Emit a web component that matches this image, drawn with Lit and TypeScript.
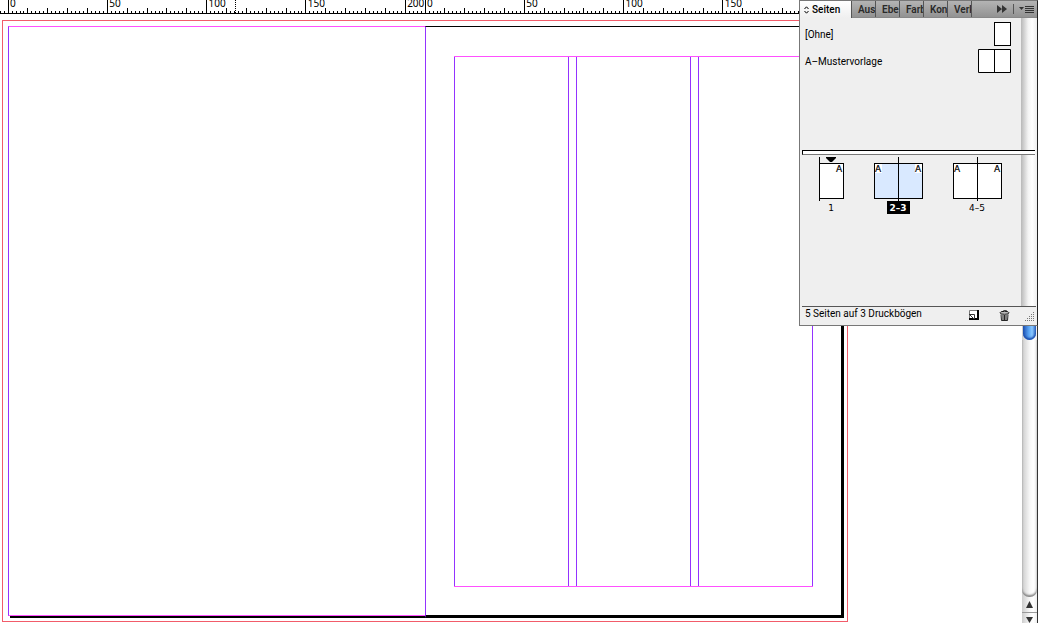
import { LitElement, html, css, svg } from "lit";
import { customElement, property } from "lit/decorators.js";

const PAGE_MM = 210;

@customElement("ruler-scale")
class RulerScale extends LitElement {
  @property({ type: Number }) from = 0;
  @property({ type: Number }) to = PAGE_MM;

  static styles = css`
    :host { display: block; min-width: 0; }
    .scale { display: block; width: 100%; height: 14px; overflow: visible; }
    line { stroke: #000; stroke-width: 1px; shape-rendering: crispEdges; }
    text { font: 10px/12px "Lucida Grande", "Noto Sans", sans-serif; fill: #000; }
  `;

  render() {
    const ticks = [];
    const labels = [];
    for (let mm = this.from; mm < this.to; mm += 2) {
      const x = `${(mm / PAGE_MM) * 100}%`;
      const top = mm % 50 === 0 ? 0 : mm % 10 === 0 ? 8 : 11;
      ticks.push(svg`<line x1=${x} x2=${x} y1=${top} y2="13" transform="translate(0.1 0)"></line>`);
      if (mm >= 0 && mm % 50 === 0) {
        labels.push(svg`<text x=${x} y="7" dx="2">${mm}</text>`);
      }
    }
    return html`<svg class="scale" aria-hidden="true">${ticks}${labels}</svg>`;
  }
}

@customElement("page-thumb")
class PageThumb extends LitElement {
  @property() label = "";
  @property({ type: Number }) pages = 2;
  @property({ type: Boolean }) selected = false;
  @property({ type: Boolean }) section = false;

  static styles = css`
    :host { display: block; }
    .thumb {
      display: flex; flex-direction: column; align-items: center;
      padding: 0; border: 0; background: none; color: #000;
      font: 9px/12px "Lucida Grande", "DejaVu Sans", sans-serif;
    }
    .spread { display: block; }
    .sheet { fill: #fff; stroke: #000; }
    .on .sheet { fill: #d9e9ff; }
    .spine { stroke: #000; }
    .tag { fill: #fff; }
    text { font: 9px "Lucida Grande", "DejaVu Sans", sans-serif; stroke: #000; stroke-width: 0.2px; }
    .label { padding: 1px 3px 0 2px; }
    .on .label { background: #000; color: #fff; font-weight: bold; }
  `;

  render() {
    const single = this.pages === 1;
    const w = single ? 25 : 49;
    const spine = single ? 0.5 : 24.5;
    return html`
      <button class="thumb ${this.selected ? "on" : ""}" aria-pressed=${this.selected}>
        <svg class="spread" width=${w} height="45" viewBox="0 0 ${w} 45">
          <rect class="sheet" x="0.5" y="7.5" width=${w - 1} height="35"></rect>
          ${single ? "" : svg`<rect class="tag" x="1" y="8" width="7" height="9"></rect><text x="1" y="16">A</text>`}
          <rect class="tag" x=${w - 8} y="8" width="7" height="9"></rect>
          <text x=${w - 8} y="16">A</text>
          <path class="spine" d="M${spine} 1V45"></path>
          ${this.section ? svg`<path d="M7 1H17V2L13 6H11L7 2Z"></path>` : ""}
        </svg>
        <span class="label">${this.label}</span>
      </button>`;
  }
}

@customElement("pages-panel")
class PagesPanel extends LitElement {
  static styles = css`
    :host {
      display: flex; flex-direction: column; box-sizing: border-box;
      border: 1px solid #777; border-right-color: #222; background: #efefef;
      font: 10px/14px "Lucida Grande", "Roboto", sans-serif; color: #000;
    }
    button { font: inherit; color: inherit; padding: 0; border: 0; background: none; }
    .tabs { display: flex; height: 17px; background: linear-gradient(#b4b4b4, #929292); border-bottom: 1px solid #888; box-sizing: border-box; }
    .tab {
      width: 24px; padding: 1px 0 0 6px; overflow: hidden; text-align: left; white-space: nowrap;
      border-right: 1px solid #555; color: #2a2a2a; font-weight: 600;
    }
    .tab.active {
      display: flex; align-items: center; gap: 3px; width: 52px; padding-left: 4px;
      height: 17px; background: linear-gradient(#fff, #efefef); color: #000; font-weight: 500;
    }
    .tools { display: flex; align-items: center; margin-left: auto; padding-right: 3px; gap: 5px; }
    .tools button { display: flex; }
    .body { flex: 1; display: grid; grid-template-columns: 1fr 16px; min-height: 0; }
    .lists { display: flex; flex-direction: column; padding-left: 2px; min-width: 0; }
    .masters { height: 132px; padding: 2px 10px 0 3px; box-sizing: border-box; }
    .master { display: flex; width: 100%; height: 27px; align-items: center; justify-content: space-between; }
    .master span { padding-top: 2px; }
    .divider { position: relative; height: 3px; border: 1px solid #000; border-bottom-color: #777; border-right: 0; background: #fff; margin-right: -14px; }
    .pages { display: flex; align-items: flex-start; gap: 30px; padding: 1px 0 0 17px; }
    .track { background: linear-gradient(90deg, #b8b8b8, #f4f4f4 45%, #fff 70%, #eee); }
    .foot {
      display: grid; grid-template-columns: 1fr 30px 26px 11px; align-items: center;
      height: 18px; margin: 0 1px 0 2px; padding-left: 3px; border-top: 1px solid #555;
    }
    .foot span { align-self: start; }
    .foot button { display: flex; padding-bottom: 2px; }
    .foot svg { display: block; }
  `;

  render() {
    return html`
      <div class="tabs" role="tablist">
        <button class="tab active" role="tab" aria-selected="true">
          <svg width="5" height="8" viewBox="0 0 5 8"><path d="M.5 3 2.5.8 4.5 3M.5 5 2.5 7.2 4.5 5" fill="none" stroke="#000"></path></svg>Seiten
        </button>
        ${["Aus", "Ebe", "Farb", "Kon", "Verk"].map((t) => html`<button class="tab" role="tab" aria-selected="false">${t}</button>`)}
        <div class="tools">
          <button aria-label="Reduzieren"><svg width="11" height="8" viewBox="0 0 11 8"><path d="M0 0 5 4 0 8ZM5 0 10 4 5 8Z" fill="#333"></path></svg></button>
          <svg width="1" height="10"><path d="M.5 0V10" stroke="#555"></path></svg>
          <button aria-label="Menü"><svg width="15" height="9" viewBox="0 0 15 9"><path d="M0 2H5L2.500 5Z" fill="#333"></path><path d="M6 1.500H15M6 3.500H15M6 5.500H15M6 7.500H15" stroke="#333"></path></svg></button>
        </div>
      </div>
      <div class="body">
        <div class="lists">
          <div class="masters">
            <button class="master"><span>[Ohne]</span>
              <svg width="17" height="24"><rect x=".5" y=".5" width="16" height="23" fill="#fff" stroke="#000"></rect></svg></button>
            <button class="master"><span>A–Mustervorlage</span>
              <svg width="33" height="24"><path d="M.5 .5H32.500V23.500H.5ZM16.500 .5V23.500" fill="#fff" stroke="#000"></path></svg></button>
          </div>
          <div class="divider"></div>
          <div class="pages">
            <page-thumb label="1" pages="1" section></page-thumb>
            <page-thumb label="2–3" selected></page-thumb>
            <page-thumb label="4–5"></page-thumb>
          </div>
        </div>
        <div class="track"></div>
      </div>
      <div class="foot">
        <span>5 Seiten auf 3 Druckbögen</span>
        <button aria-label="Neue Seite"><svg width="10" height="10" viewBox="0 0 10 10"><path d="M.5 .5H9.500V9.500H.5Z" fill="#fff" stroke="#777"></path><path d="M9 0V9H0" fill="none" stroke="#000" stroke-width="2"></path><path d="M0 4.500H5.500V9" fill="none" stroke="#333"></path><path d="M1 5 5 9" stroke="#333"></path></svg></button>
        <button aria-label="Löschen"><svg width="11" height="11" viewBox="0 0 11 11"><path d="M2 4 2.500 10.500H8.500L9 4Z" fill="#ddd"></path><ellipse cx="5.500" cy="2.800" rx="4.500" ry="1.500" fill="#bbb" stroke="#222"></ellipse><path d="M3.500 1.500 5.500 .5 8 1M2 4.500 2.500 10.500H8.500L9 4.500M4 5V10M5.500 5V10M7 5V10" fill="none" stroke="#111" stroke-width=".9"></path></svg></button>
        <svg width="10" height="10" viewBox="0 0 10 10"><path d="M8.500 1V2M6.500 3V4M8.500 3V4M4.500 5V6M6.500 5V6M8.500 5V6M2.500 7V8M4.500 7V8M6.500 7V8M8.500 7V8M.5 9V10M2.500 9V10M4.500 9V10M6.500 9V10M8.500 9V10" stroke="#777"></path></svg>
      </div>`;
  }
}

@customElement("app-root")
class AppRoot extends LitElement {
  static styles = css`
    :host { display: flex; flex-direction: column; position: relative; height: 100vh; overflow: hidden; background: #fff; }
    .ruler {
      display: grid; grid-template-columns: 1fr 1fr; height: 14px; box-sizing: border-box;
      padding: 0 196px 0 8px; border-bottom: 1px solid #000;
    }
    .cursor { position: absolute; top: 0; left: 235px; height: 13px; border-left: 1px dotted #000; }
    .work { flex: 1; display: grid; grid-template-columns: 1fr 16px; min-height: 0; }
    .board { padding: 6px 174px 1px 2px; display: grid; }
    .bleed { border: 1px solid #f25c6a; padding: 5px 5px 3px 5px; display: grid; grid-template-columns: 1fr 1fr; }
    .left { display: flex; flex-direction: column; }
    .paper { flex: 1; border: 1px solid #ff50ff; border-left-color: #9333ff; border-right: 0; }
    .shade { height: 2px; margin-left: 2px; background: #000; }
    .right { display: grid; margin-right: -2px; border: 3px solid #000; border-top-width: 1px; border-left: 1px solid #9333ff; padding: 29px 28px 28px 28px; }
    .columns { display: grid; grid-template-columns: 1fr 1fr 1fr; gap: 7px; border: solid #ff50ff; border-width: 1px 0; }
    .column { border: solid #9333ff; border-width: 0 1px; }
    .bar { display: flex; flex-direction: column; border-right: 1px solid #333; background: linear-gradient(90deg, #ccc, #f6f6f6 50%, #fff 75%, #eee); }
    .thumb { height: 326px; border-radius: 0 0 7px 7px; background: linear-gradient(90deg, #1c4fb0, #5aa5f5 45%, #8ac8ff 70%, #2a62c0); box-shadow: inset 0 -2px 2px #1c4fb0; margin: 0 1px; }
    .rest { flex: 1; border-radius: 0 0 7px 7px; box-shadow: inset 0 -2px 2px #888; }
    .arrow { box-sizing: border-box; height: 15px; padding: 0; border: 0; background: none; display: grid; place-items: center; }
    .arrow.down { height: 11px; border-top: 1px solid #999; place-items: end center; }
    .panel { position: absolute; top: 0; right: 0; width: 239px; height: 326px; }
  `;

  render() {
    return html`
      <div class="ruler">
        <ruler-scale from="-4"></ruler-scale>
        <ruler-scale to="190"></ruler-scale>
      </div>
      <div class="cursor"></div>
      <main class="work">
        <div class="board">
          <div class="bleed">
            <div class="left"><div class="paper"></div><div class="shade"></div></div>
            <div class="right">
              <div class="columns">
                <div class="column"></div><div class="column"></div><div class="column"></div>
              </div>
            </div>
          </div>
        </div>
        <div class="bar">
          <div class="thumb"></div>
          <div class="rest"></div>
          <button class="arrow" aria-label="Nach oben"><svg width="7" height="7"><path d="M3.500 0 7 7H0Z" fill="#333"></path></svg></button>
          <button class="arrow down" aria-label="Nach unten"><svg width="7" height="6"><path d="M0 0H7L3.500 6Z" fill="#333"></path></svg></button>
        </div>
      </main>
      <pages-panel class="panel"></pages-panel>`;
  }
}
